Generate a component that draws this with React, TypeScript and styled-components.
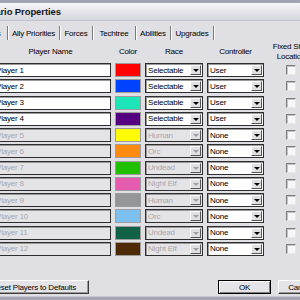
import React from 'react';
import styled, { createGlobalStyle } from 'styled-components';

type Player = {
    name: string;
    color: string;
    race: string;
    controller: string;
    enabled: boolean;
};

const RACES = ['Human', 'Orc', 'Undead', 'Night Elf'];
const COLORS = [
    '#ff0303', '#0042ff', '#1ce6b9', '#540081',
    '#fffc01', '#fe8a0e', '#20c000', '#e55bb0',
    '#959697', '#7ebff1', '#106246', '#4e2a04',
];

const players: Player[] = COLORS.map((color, i) => ({
    name: `Player ${i + 1}`,
    color,
    race: i < 4 ? 'Selectable' : RACES[(i - 4) % 4],
    controller: i < 4 ? 'User' : 'None',
    enabled: i < 4,
}));

const tabs = [
    { label: 'Players', width: 38 },
    { label: 'Ally Priorities', width: 51 },
    { label: 'Forces', width: 32 },
    { label: 'Techtree', width: 42 },
    { label: 'Abilities', width: 34 },
    { label: 'Upgrades', width: 42 },
];

const GlobalStyle = createGlobalStyle`
    html, body {
        margin: 0;
        padding: 0;
        background: #e0dfe3;
    }
    body {
        font-family: "Liberation Sans", Arial, sans-serif;
        font-size: 8px;
        letter-spacing: -0.2px;
        color: #000;
    }
`;

export default function App() {
    return (
        <>
            <GlobalStyle />
            <Window>
                <FrameTop />
                <TitleBar>
                    <TitleText>Scenario Properties</TitleText>
                </TitleBar>

                <TabStrip>
                    {tabs.map((t) => (
                        <Tab key={t.label} $w={t.width}>{t.label}</Tab>
                    ))}
                </TabStrip>

                <Header>
                    <HeadCell>Player Name</HeadCell>
                    <HeadCell>Color</HeadCell>
                    <HeadCell>Race</HeadCell>
                    <HeadCell>Controller</HeadCell>
                    <HeadCell>Fixed Start<br />Location</HeadCell>
                </Header>

                <Rows>
                    {players.map((p) => (
                        <Row key={p.name}>
                            <NameBox $disabled={!p.enabled}>{p.name}</NameBox>
                            <Swatch style={{ background: p.color }} />
                            <Combo $disabled={!p.enabled}>
                                <ComboText>{p.race}</ComboText>
                                <DropButton><Arrow $disabled={!p.enabled} /></DropButton>
                            </Combo>
                            <Combo>
                                <ComboText>{p.controller}</ComboText>
                                <DropButton><Arrow /></DropButton>
                            </Combo>
                            <CheckCell>
                                <CheckBox />
                            </CheckCell>
                        </Row>
                    ))}
                </Rows>

                <ButtonRow>
                    <Button $w={111}>Reset Players to Defaults</Button>
                    <RightButtons>
                        <Button $w={53} $default>OK</Button>
                        <Button $w={44}>Cancel</Button>
                    </RightButtons>
                </ButtonRow>
                <FrameBottom />
            </Window>
        </>
    );
}

const Window = styled.div`
    width: 300px;
    height: 300px;
    overflow: hidden;
    display: flex;
    flex-direction: column;
    background: #e0dfe3;
`;

const FrameTop = styled.div`
    flex-shrink: 0;
    height: 3px;
    background: #a3a3b6;
`;

const FrameBottom = styled.div`
    flex-shrink: 0;
    height: 3px;
    background: #a6a6b6;
    border-top: 1px solid #c8c8d2;
`;

const TitleBar = styled.div`
    flex-shrink: 0;
    box-sizing: border-box;
    height: 18px;
    display: flex;
    align-items: center;
    background: linear-gradient(#f6f6f9, #e2e2e8 60%, #d6d6de);
    border-bottom: 1px solid #c2c2cc;
`;

const TitleText = styled.span`
    margin-left: -27px;
    font-weight: bold;
    font-size: 9.5px;
    letter-spacing: -0.1px;
    color: #151515;
    white-space: nowrap;
`;

const TabStrip = styled.div`
    flex-shrink: 0;
    display: flex;
    height: 14px;
    margin-top: 5px;
    margin-left: -31px;
`;

const Tab = styled.div<{ $w: number }>`
    flex-shrink: 0;
    width: ${(p) => p.$w}px;
    display: flex;
    align-items: center;
    justify-content: center;
    white-space: nowrap;
    border-right: 1px solid #7a7a7a;
    box-shadow: 1px 0 0 #ffffff;
`;

const Header = styled.div`
    flex-shrink: 0;
    display: grid;
    grid-template-columns: 121px 26px 58px 57px 46px;
    column-gap: 4px;
    height: 23px;
    margin-left: -10px;
    align-items: center;
`;

const HeadCell = styled.div`
    text-align: center;
    white-space: nowrap;
    line-height: 9.5px;
`;

const Rows = styled.div`
    flex-shrink: 0;
    display: flex;
    flex-direction: column;
    gap: 2.27px;
    margin-left: -10px;
`;

const Row = styled.div`
    display: grid;
    grid-template-columns: 121px 26px 58px 57px 46px;
    column-gap: 4px;
    height: 14px;
`;

const sunken = `
    box-sizing: border-box;
    border: 1px solid #2e2e2e;
    box-shadow: inset 1px 1px 0 #9a9a9a;
`;

const NameBox = styled.div<{ $disabled?: boolean }>`
    ${sunken}
    height: 14px;
    display: flex;
    align-items: center;
    padding-left: 5px;
    white-space: nowrap;
    background: ${(p) => (p.$disabled ? '#e4e4e7' : '#ffffff')};
    color: ${(p) => (p.$disabled ? '#a7a7ab' : '#000000')};
`;

const Swatch = styled.div`
    box-sizing: border-box;
    height: 14px;
    border: 1px solid #9c9c9c;
`;

const Combo = styled.div<{ $disabled?: boolean }>`
    ${sunken}
    height: 14px;
    display: flex;
    align-items: stretch;
    background: ${(p) => (p.$disabled ? '#e4e4e7' : '#ffffff')};
    color: ${(p) => (p.$disabled ? '#a7a7ab' : '#000000')};
`;

const ComboText = styled.div`
    flex: 1;
    display: flex;
    align-items: center;
    padding-left: 2px;
    white-space: nowrap;
    overflow: hidden;
`;

const DropButton = styled.div`
    box-sizing: border-box;
    width: 11px;
    margin: 1px 1px 1px 0;
    display: flex;
    align-items: center;
    justify-content: center;
    background: #e0dfe3;
    border-top: 1px solid #ffffff;
    border-left: 1px solid #ffffff;
    border-right: 1px solid #555555;
    border-bottom: 1px solid #555555;
`;

const Arrow = styled.div<{ $disabled?: boolean }>`
    width: 0;
    height: 0;
    margin-top: 1px;
    border-left: 3px solid transparent;
    border-right: 3px solid transparent;
    border-top: 3px solid ${(p) => (p.$disabled ? '#a0a0a4' : '#000000')};
`;

const CheckCell = styled.div`
    display: flex;
    align-items: center;
    justify-content: center;
`;

const CheckBox = styled.div`
    box-sizing: border-box;
    width: 10px;
    height: 10px;
    background: #f7f7f7;
    border-top: 1px solid #7c7c7c;
    border-left: 1px solid #7c7c7c;
    border-right: 1px solid #e8e8e8;
    border-bottom: 1px solid #e8e8e8;
    box-shadow: inset 1px 1px 0 #c4c4c4;
`;

const ButtonRow = styled.div`
    flex-shrink: 0;
    display: flex;
    height: 14px;
    margin-top: auto;
    margin-bottom: 2px;
    margin-left: -22px;
`;

const RightButtons = styled.div`
    display: flex;
    gap: 7px;
    margin-left: auto;
    margin-right: -22px;
`;

const Button = styled.div<{ $w: number; $default?: boolean }>`
    flex-shrink: 0;
    box-sizing: border-box;
    width: ${(p) => p.$w}px;
    height: 14px;
    display: flex;
    align-items: center;
    justify-content: center;
    white-space: nowrap;
    background: #e4e3e7;
    border: 1px solid;
    border-color: ${(p) => (p.$default ? '#000 #000 #000 #000' : '#ffffff #3a3a3a #3a3a3a #ffffff')};
    box-shadow: ${(p) =>
        p.$default ? 'inset 1px 1px 0 #ffffff, inset -1px -1px 0 #808080' : 'inset -1px -1px 0 #9a9a9a'};
`;
